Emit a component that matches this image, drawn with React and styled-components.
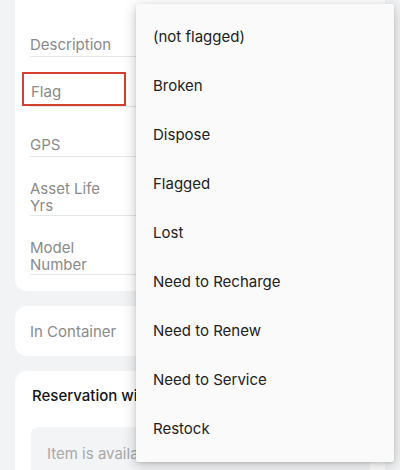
import React from 'react'
import styled, { createGlobalStyle } from 'styled-components'

const fields = [
  { label: 'Description' },
  { label: 'Flag', highlighted: true },
  { label: 'GPS' },
  { label: 'Asset Life Yrs', wrap: true },
  { label: 'Model Number', wrap: true },
]

const flags = [
  '(not flagged)',
  'Broken',
  'Dispose',
  'Flagged',
  'Lost',
  'Need to Recharge',
  'Need to Renew',
  'Need to Service',
  'Restock',
]

const App = () => {
  return (
    <>
      <GlobalStyle />
      <Page>
        <Card cut>
          {fields.map((f) => (
            <FieldRow key={f.label} wrap={f.wrap} highlighted={f.highlighted}>
              <Label wrap={f.wrap} highlighted={f.highlighted}>
                {f.label}
              </Label>
            </FieldRow>
          ))}
        </Card>
        <Card>
          <SingleRow>In Container</SingleRow>
        </Card>
        <Card>
          <SectionTitle>Reservation with Check Out</SectionTitle>
          <Notice>Item is available</Notice>
        </Card>
      </Page>
      <Menu>
        {flags.map((flag) => (
          <MenuItem key={flag}>{flag}</MenuItem>
        ))}
      </Menu>
    </>
  )
}

export default App

const GlobalStyle = createGlobalStyle`
  html, body {
    margin: 0;
    padding: 0;
    background: #f1f3f4;
    font-family: Inter, "Noto Sans", sans-serif;
    overflow: hidden;
  }
`

const Page = styled.div`
  position: relative;
  width: 400px;
  height: 470px;
  overflow: hidden;
  display: flex;
  flex-direction: column;
  gap: 15px;
  padding: 0 15px;
  box-sizing: border-box;
`

const Card = styled.div`
  background: #ffffff;
  border-radius: ${(props) => (props.cut ? '0 0 12px 12px' : '12px')};
  padding: ${(props) => (props.cut ? '7px 15px 16px' : '0 15px')};
  flex-shrink: 0;
`

const FieldRow = styled.div`
  display: flex;
  align-items: flex-end;
  box-sizing: border-box;
  height: ${(props) => (props.wrap ? '59px' : '50px')};
  padding-bottom: ${(props) =>
    props.highlighted ? '0' : props.wrap ? '1px' : '2px'};
  border-bottom: 1px solid #e4e6e8;
`

const Label = styled.span`
  box-sizing: border-box;
  width: ${(props) => (props.highlighted ? '104px' : props.wrap ? '82px' : 'auto')};
  margin-left: ${(props) => (props.highlighted ? '-8px' : '0')};
  padding: ${(props) => (props.highlighted ? '9px 7px 3px' : '0')};
  border: ${(props) => (props.highlighted ? '2px solid #d2412c' : 'none')};
  font-size: 15px;
  line-height: ${(props) => (props.wrap ? '17px' : '18px')};
  color: #8a8a8a;
`

const SingleRow = styled.div`
  height: 50px;
  display: flex;
  align-items: center;
  font-size: 15px;
  color: #8a8a8a;
`

const SectionTitle = styled.div`
  padding: 15px 0 0 2px;
  font-size: 15px;
  line-height: 19px;
  font-weight: 500;
  color: #151515;
  white-space: nowrap;
`

const Notice = styled.div`
  margin-top: 22px;
  margin-left: 1px;
  background: #f3f4f5;
  border-radius: 8px;
  padding: 17px 16px;
  font-size: 15px;
  line-height: 19px;
  color: #a9a9a9;
  white-space: nowrap;
`

const Menu = styled.div`
  position: absolute;
  left: 136px;
  top: 4px;
  width: 258px;
  height: 458px;
  box-sizing: border-box;
  padding: 8px 0 9px;
  background: #fafafa;
  box-shadow: 0 3px 14px rgba(0, 0, 0, 0.22), 0 1px 3px rgba(0, 0, 0, 0.12);
  border-radius: 2px;
`

const MenuItem = styled.div`
  height: 49px;
  display: flex;
  align-items: center;
  padding: 0 17px;
  font-size: 15px;
  color: #222222;
`
